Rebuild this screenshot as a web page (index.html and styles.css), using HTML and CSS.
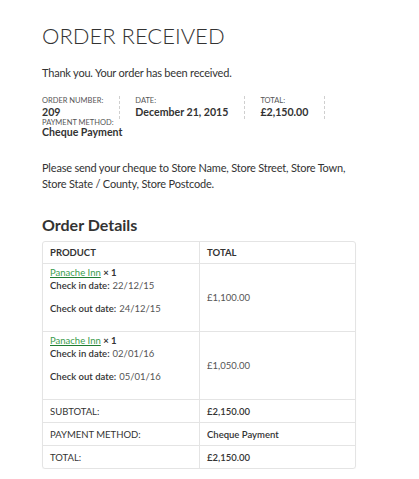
FILE: index.html
```html
<!DOCTYPE html>
<html lang="en">
<head>
<meta charset="utf-8">
<title>Order Received</title>
<link rel="stylesheet" href="styles.css">
</head>
<body>
<main class="page">
  <h1 class="title">ORDER RECEIVED</h1>
  <p class="thanks">Thank you. Your order has been received.</p>

  <ul class="order-meta">
    <li class="order-meta__item">
      <span class="order-meta__label">Order Number:</span>
      <strong class="order-meta__value">209</strong>
    </li>
    <li class="order-meta__item">
      <span class="order-meta__label">Date:</span>
      <strong class="order-meta__value">December 21, 2015</strong>
    </li>
    <li class="order-meta__item">
      <span class="order-meta__label">Total:</span>
      <strong class="order-meta__value">£2,150.00</strong>
    </li>
    <li class="order-meta__item order-meta__item--last">
      <span class="order-meta__label">Payment Method:</span>
      <strong class="order-meta__value">Cheque Payment</strong>
    </li>
  </ul>

  <p class="instructions">Please send your cheque to Store Name, Store Street, Store Town, Store State / County, Store Postcode.</p>

  <h2 class="section-title">Order Details</h2>

  <table class="order-table">
    <thead>
      <tr>
        <th class="cell cell--head">Product</th>
        <th class="cell cell--head cell--right">Total</th>
      </tr>
    </thead>
    <tbody>
      <tr>
        <td class="cell cell--product">
          <div class="item-name"><a class="item-link" href="#">Panache Inn</a> <strong class="item-qty">× 1</strong></div>
          <div class="item-meta"><span class="item-meta__key">Check in date:</span> <span class="item-meta__val">22/12/15</span></div>
          <div class="item-meta item-meta--last"><span class="item-meta__key">Check out date:</span> <span class="item-meta__val">24/12/15</span></div>
        </td>
        <td class="cell cell--price cell--right">£1,100.00</td>
      </tr>
      <tr>
        <td class="cell cell--product">
          <div class="item-name"><a class="item-link" href="#">Panache Inn</a> <strong class="item-qty">× 1</strong></div>
          <div class="item-meta"><span class="item-meta__key">Check in date:</span> <span class="item-meta__val">02/01/16</span></div>
          <div class="item-meta item-meta--last"><span class="item-meta__key">Check out date:</span> <span class="item-meta__val">05/01/16</span></div>
        </td>
        <td class="cell cell--price cell--right">£1,050.00</td>
      </tr>
    </tbody>
    <tfoot>
      <tr>
        <th class="cell cell--foot-label">Subtotal:</th>
        <td class="cell cell--foot-value cell--right">£2,150.00</td>
      </tr>
      <tr>
        <th class="cell cell--foot-label">Payment Method:</th>
        <td class="cell cell--foot-value cell--right">Cheque Payment</td>
      </tr>
      <tr>
        <th class="cell cell--foot-label">Total:</th>
        <td class="cell cell--foot-value cell--right">£2,150.00</td>
      </tr>
    </tfoot>
  </table>
</main>
</body>
</html>
```

FILE: styles.css
```css
html, body {
  margin: 0;
  padding: 0;
  background: #ffffff;
}

body {
  font-family: Lato, "Open Sans", "Liberation Sans", sans-serif;
  color: #333333;
}

.page {
  width: 314px;
  margin-left: 42px;
  padding-top: 22px;
}

.title {
  margin: 0;
  font-size: 22px;
  line-height: 28px;
  font-weight: 300;
  color: #333333;
}

.thanks {
  margin: 14px 0 0;
  font-size: 11px;
  letter-spacing: -0.2px;
  line-height: 17px;
  color: #333333;
}

.order-meta {
  list-style: none;
  margin: 15px 0 0;
  padding: 0;
  display: flex;
  flex-wrap: wrap;
}

.order-meta__item {
  display: flex;
  flex-direction: column;
  padding-right: 16px;
  margin-right: 15px;
  border-right: 1px dashed #cfcfcf;
}

.order-meta__item--last {
  border-right: none;
}

.order-meta__label {
  font-size: 7.5px;
  line-height: 9px;
  text-transform: uppercase;
  color: #555555;
}

.order-meta__value {
  font-size: 10.6px;
  line-height: 14px;
  font-weight: 700;
  color: #333333;
}

.order-meta__item--last .order-meta__label {
  line-height: 8px;
}

.order-meta__item--last .order-meta__value {
  line-height: 11px;
}

.instructions {
  margin: 22px 0 0;
  font-size: 11px;
  letter-spacing: -0.2px;
  line-height: 16px;
  color: #333333;
}

.section-title {
  margin: 23px 0 6px;
  font-size: 16px;
  line-height: 20px;
  font-weight: 700;
  color: #333333;
}

.order-table {
  width: 100%;
  table-layout: fixed;
  border-collapse: separate;
  border-spacing: 0;
  border: 1px solid #e4e4e4;
  border-radius: 3px;
  box-shadow: 0 1px 1px rgba(0, 0, 0, 0.04);
  font-size: 9.5px;
  line-height: 13px;
  color: #333333;
}

.cell {
  padding: 4px 7px;
  text-align: left;
  border-top: 1px solid #e4e4e4;
  vertical-align: middle;
}

.cell--right {
  border-left: 1px solid #e4e4e4;
}

.cell--head {
  border-top: none;
  font-weight: 700;
  text-transform: uppercase;
}

.cell--product {
  padding: 2px 7px;
  vertical-align: top;
}

.item-link {
  color: #3a9c4b;
  text-decoration: underline;
  text-decoration-color: #1f7d32;
}

.item-qty {
  font-weight: 700;
}

.item-meta {
  display: flex;
  gap: 3px;
}

.item-meta--last {
  margin-top: 10px;
  margin-bottom: 14px;
}

.item-meta__key {
  font-weight: 600;
  color: #333333;
}

.item-meta__val {
  color: #555555;
}

.cell--price {
  color: #555555;
}

.cell--foot-label {
  padding: 5px 7px 4px;
  font-weight: 400;
  text-transform: uppercase;
  color: #333333;
}

.cell--foot-value {
  padding: 5px 7px 4px;
  font-weight: 600;
  color: #333333;
}
```
